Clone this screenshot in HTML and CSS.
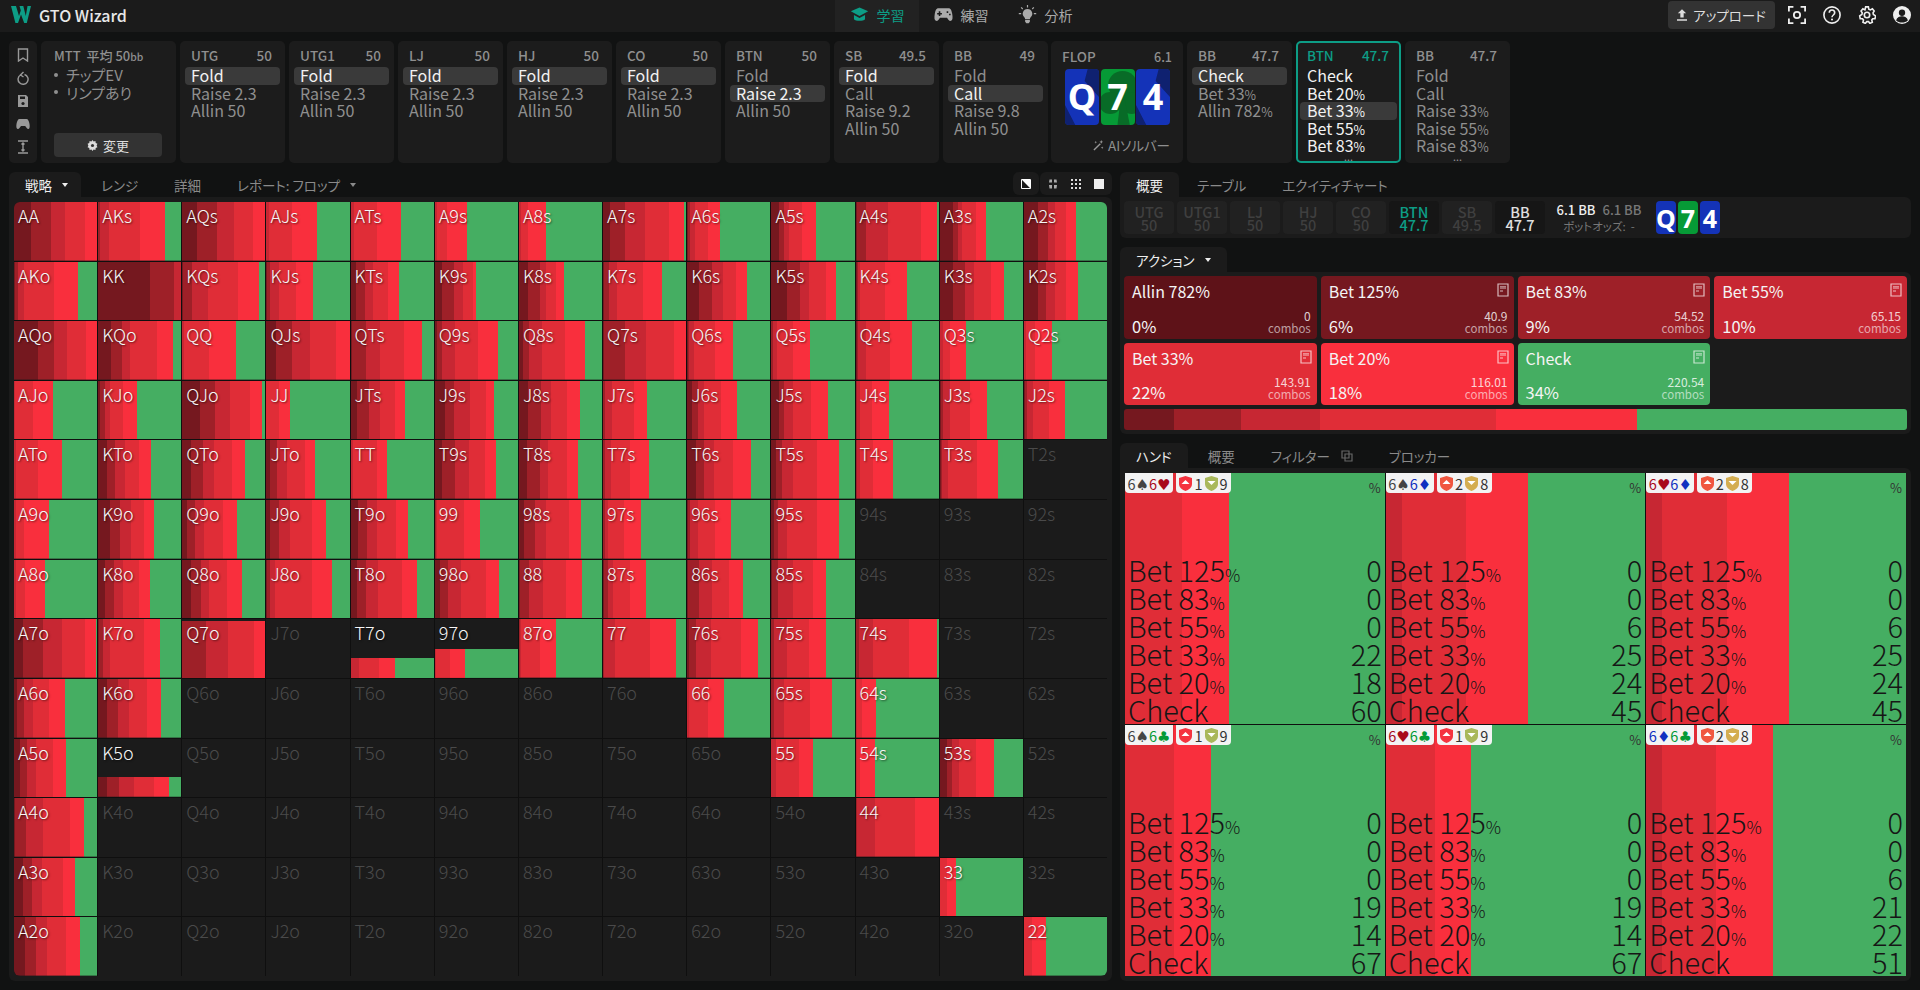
FILE: index.html
```html
<!DOCTYPE html>
<html lang="ja">
<head>
<meta charset="utf-8">
<title>GTO Wizard</title>
<link rel="stylesheet" href="styles.css">
</head>
<body>
<header class="topbar">
  <div class="brand">
    <svg class="logo" viewBox="0 0 20 17"><path fill="#0d9d86" d="M0 0h5l3 10 1.800-5.500L8.500 0h3.800l2.500 10L16.500 0H20l-4.200 17h-2.600l-3.200-8.500L7 17H4.400z"/></svg>
    <span>GTO Wizard</span>
  </div>
  <nav class="nav">
    <a class="nav-item on"><svg viewBox="0 0 24 20"><path d="M12 1l11 5-11 6L1 6z"/><path d="M5 10.500l7 3.800 7-3.800V16c-2 2.600-12 2.600-14 0z"/></svg>学習</a>
    <a class="nav-item"><svg viewBox="0 0 24 18"><path d="M6 1h12c3 0 4 2 5 7 .8 5 .7 8-1.500 9-2 .7-3.500-1.500-5-4H7.500c-1.500 2.500-3 4.700-5 4-2.200-1-2.300-4-1.500-9 1-5 2-7 5-7z"/><path fill="#1b1b1b" d="M6 5h2v2h2v2H8v2H6V9H4V7h2zM16 5h2v2h-2zM19 8h2v2h-2z"/></svg>練習</a>
    <a class="nav-item"><svg viewBox="0 0 22 24"><path d="M11 5a6 6 0 0 1 4 10.500c-.8.8-1 1.500-1 2.500H8c0-1-.2-1.700-1-2.500A6 6 0 0 1 11 5zM8 19h6v2l-1.500 2h-3L8 21z"/><path fill="none" stroke="currentColor" stroke-width="1.500" d="M11 0v3M3 3l2 2M19 3l-2 2M0 11h3M19 11h3"/></svg>分析</a>
  </nav>
  <div class="top-right">
    <button class="upload"><svg viewBox="0 0 12 14"><path fill="#ddd" d="M6 0l5 5H8v5H4V5H1zM0 12h12v2H0z"/></svg>アップロード</button>
    <svg class="top-ico" viewBox="0 0 20 20"><path fill="none" stroke="#eee" stroke-width="2" d="M1 6V1h5M14 1h5v5M19 14v5h-5M6 19H1v-5"/><circle cx="10" cy="10" r="3.500" fill="none" stroke="#eee" stroke-width="2"/></svg>
    <svg class="top-ico" viewBox="0 0 20 20"><circle cx="10" cy="10" r="9" fill="none" stroke="#eee" stroke-width="1.800"/><path fill="none" stroke="#eee" stroke-width="1.800" d="M7 7.500C7 3.500 13 3.500 13 7.500c0 2.500-3 2.500-3 5"/><circle cx="10" cy="15" r="1.200" fill="#eee"/></svg>
    <svg class="top-ico" viewBox="0 0 20 20"><path fill="none" stroke="#eee" stroke-width="1.800" d="M8.500 1h3l.5 2.500 1.700.8L16 3l2 2.500-1.300 2.100.4 1.900L19.500 11l-.6 3-2.500.1-1.100 1.500.6 2.400-2.700 1.300-1.600-2H9.800l-1.600 2-2.700-1.300.6-2.400-1.100-1.500-2.500-.1-.6-3 2.400-1.500.4-1.900L3.400 5.500 5.400 3l2.300 1.300 .3-.8z"/><circle cx="10" cy="10" r="3" fill="none" stroke="#eee" stroke-width="1.800"/></svg>
    <svg class="top-ico" viewBox="0 0 20 20"><circle cx="10" cy="10" r="10" fill="#eee"/><circle cx="10" cy="7.500" r="3.500" fill="#1b1b1b"/><path fill="#1b1b1b" d="M3.500 16c1-3.500 4-4.500 6.500-4.500s5.500 1 6.500 4.500c-3.500 3-9.500 3-13 0z"/></svg>
  </div>
</header>

<section class="tree">
  <div class="card side">
    <svg viewBox="0 0 12 14"><path fill="none" stroke="currentColor" stroke-width="1.400" d="M1.500 1h9v12L6 10l-4.500 3z"/></svg>
    <svg viewBox="0 0 12 14"><path fill="none" stroke="currentColor" stroke-width="1.400" d="M3.500 4a5 5 0 1 0 4-.5M6.500 1L3.500 4l3 2"/></svg>
    <svg viewBox="0 0 12 14"><path fill="currentColor" d="M1 1h8l2 2v10H1zM3 2.500V5h5V2.500z"/><circle cx="6" cy="9.500" r="1.600" fill="#1c1c1c"/></svg>
    <svg viewBox="0 0 14 12"><path fill="currentColor" d="M3.500 1h7c1.500 0 2.500 2 3 5 .5 3 0 5-1.300 5-1 0-2-1.500-3-3H5C4 9.500 3 11 2 11 .5 11 0 9 .5 6c.5-3 1.500-5 3-5z"/></svg>
    <svg viewBox="0 0 12 14"><path fill="none" stroke="currentColor" stroke-width="1.400" d="M1 1h10M1 13h10M6 3v8M4.500 4.500L6 3l1.500 1.500M4.500 9.500L6 11l1.500-1.500"/></svg>
  </div>
  <div class="card info">
    <div class="info-title">MTT&nbsp; 平均 50<small>bb</small></div>
    <ul class="info-list"><li>チップEV</li><li>リンプあり</li></ul>
    <button class="change"><svg viewBox="0 0 12 12"><path fill="#ddd" d="M6 0l1.200 1.700 2-.5.300 2 1.900.800-.9 2 .9 2-1.900.800-.3 2-2-.5L6 12l-1.200-1.700-2 .5-.3-2-1.900-.8.900-2-.9-2 1.900-.8.300-2 2 .5z"/><circle cx="6" cy="6" r="1.700" fill="#333"/></svg>変更</button>
  </div>
  <div class="card pos"><div class="pos-head"><span>UTG</span><span>50</span></div><div class="pos-act sel">Fold</div><div class="pos-act">Raise 2.3</div><div class="pos-act">Allin 50</div></div>
  <div class="card pos"><div class="pos-head"><span>UTG1</span><span>50</span></div><div class="pos-act sel">Fold</div><div class="pos-act">Raise 2.3</div><div class="pos-act">Allin 50</div></div>
  <div class="card pos"><div class="pos-head"><span>LJ</span><span>50</span></div><div class="pos-act sel">Fold</div><div class="pos-act">Raise 2.3</div><div class="pos-act">Allin 50</div></div>
  <div class="card pos"><div class="pos-head"><span>HJ</span><span>50</span></div><div class="pos-act sel">Fold</div><div class="pos-act">Raise 2.3</div><div class="pos-act">Allin 50</div></div>
  <div class="card pos"><div class="pos-head"><span>CO</span><span>50</span></div><div class="pos-act sel">Fold</div><div class="pos-act">Raise 2.3</div><div class="pos-act">Allin 50</div></div>
  <div class="card pos"><div class="pos-head"><span>BTN</span><span>50</span></div><div class="pos-act">Fold</div><div class="pos-act sel">Raise 2.3</div><div class="pos-act">Allin 50</div></div>
  <div class="card pos"><div class="pos-head"><span>SB</span><span>49.5</span></div><div class="pos-act sel">Fold</div><div class="pos-act">Call</div><div class="pos-act">Raise 9.2</div><div class="pos-act">Allin 50</div></div>
  <div class="card pos"><div class="pos-head"><span>BB</span><span>49</span></div><div class="pos-act">Fold</div><div class="pos-act sel">Call</div><div class="pos-act">Raise 9.8</div><div class="pos-act">Allin 50</div></div>
  <div class="card flop">
    <div class="pos-head flop-head"><span>FLOP</span><span class="flop-pot">6.1</span></div>
    <div class="board">
      <div class="pcard blue">
        <svg viewBox="0 0 33 56" preserveAspectRatio="none"><path d="M22 0h11v26L33 28 19 12zM0 36l10 20H0z"/></svg><span>Q</span></div>
      <div class="pcard green">
        <svg viewBox="0 0 33 56" preserveAspectRatio="none"><circle cx="21" cy="16" r="14"/><circle cx="9" cy="34" r="11"/><circle cx="30" cy="34" r="11"/><path d="M19 30h4l5 26H16z"/></svg><span>7</span></div>
      <div class="pcard blue">
        <svg viewBox="0 0 33 56" preserveAspectRatio="none"><path d="M22 0h11v26L33 28 19 12zM0 36l10 20H0z"/></svg><span>4</span></div>
    </div>
    <div class="solver"><svg viewBox="0 0 12 12"><path stroke="#999" stroke-width="1.500" d="M1 11l7-7"/><path fill="#999" d="M9 0l.7 1.500L11 2l-1.300.6L9 4l-.6-1.400L7 2l1.400-.5zM3 1l.4 1 1 .4-1 .4L3 4l-.4-1.200-1-.4 1-.4zM10 7l.4 1 1 .4-1 .4-.4 1.200-.4-1.200-1-.4 1-.4z"/></svg>AIソルバー</div>
  </div>
  <div class="card pos"><div class="pos-head"><span>BB</span><span>47.7</span></div><div class="pos-act sel">Check</div><div class="pos-act">Bet 33<small>%</small></div><div class="pos-act">Allin 782<small>%</small></div></div>
  <div class="card pos active"><div class="pos-head"><span>BTN</span><span>47.7</span></div><div class="pos-act">Check</div><div class="pos-act">Bet 20<small>%</small></div><div class="pos-act sel">Bet 33<small>%</small></div><div class="pos-act">Bet 55<small>%</small></div><div class="pos-act">Bet 83<small>%</small></div><div class="more">•••</div></div>
  <div class="card pos"><div class="pos-head"><span>BB</span><span>47.7</span></div><div class="pos-act">Fold</div><div class="pos-act">Call</div><div class="pos-act">Raise 33<small>%</small></div><div class="pos-act">Raise 55<small>%</small></div><div class="pos-act">Raise 83<small>%</small></div><div class="more">•••</div></div>
</section>

<main class="main">
  <section class="left">
    <div class="tabs">
      <a class="tab on">戦略<i class="caret"></i></a>
      <a class="tab">レンジ</a>
      <a class="tab">詳細</a>
      <a class="tab">レポート: フロップ<i class="caret"></i></a>
      <div class="tools">
        <div class="tool-block one"><svg viewBox="0 0 12 12"><path fill="none" stroke="#fff" stroke-width="1.200" d="M.6.6h10.800v10.800H.6z"/><path fill="#fff" d="M1 1h10v10z"/></svg></div>
        <div class="tool-block">
          <svg viewBox="0 0 10 10"><path fill="#aaa" d="M1.500.5h2.500v3H1zM6 .5h2.500L9 3.500H6zM1 6h3v3.500H1.500zM6 6h3l-.5 3.500H6z"/></svg>
          <svg viewBox="0 0 10 10"><path fill="#ddd" d="M0 0h2v2H0zM4 0h2v2H4zM8 0h2v2H8zM0 4h2v2H0zM4 4h2v2H4zM8 4h2v2H8zM0 8h2v2H0zM4 8h2v2H4zM8 8h2v2H8z"/></svg>
          <svg viewBox="0 0 10 10"><path fill="#eee" d="M0 0h10v10H0z"/></svg>
        </div>
      </div>
    </div>
    <div class="panel matrix-panel"><div class="matrix" id="matrix"></div></div>
  </section>

  <section class="right">
    <div class="tabs">
      <a class="tab on">概要</a><a class="tab">テーブル</a><a class="tab">エクイティチャート</a>
    </div>
    <div class="panel seats">
      <div class="seat"><b>UTG</b><b>50</b></div>
      <div class="seat"><b>UTG1</b><b>50</b></div>
      <div class="seat"><b>LJ</b><b>50</b></div>
      <div class="seat"><b>HJ</b><b>50</b></div>
      <div class="seat"><b>CO</b><b>50</b></div>
      <div class="seat btn"><b>BTN</b><b>47.7</b></div>
      <div class="seat"><b>SB</b><b>49.5</b></div>
      <div class="seat bb"><b>BB</b><b>47.7</b></div>
      <div class="pot">
        <div class="pot-top"><b>6.1 BB</b><b class="pot-dim">6.1 BB</b></div>
        <div class="pot-odds">ポットオッズ:&nbsp; -</div>
      </div>
      <div class="mini-board">
        <div class="mini blue">Q</div><div class="mini green">7</div><div class="mini blue">4</div>
      </div>
    </div>

    <div class="tabs action-tabs"><a class="tab on">アクション<i class="caret"></i></a></div>
    <div class="panel actions">
      <div class="action-grid" id="actions"></div>
      <div class="action-bar" id="actionBar"></div>
    </div>

    <div class="tabs hand-tabs">
      <a class="tab on">ハンド</a><a class="tab">概要</a>
      <a class="tab">フィルター<svg class="copy" viewBox="0 0 12 12"><path fill="none" stroke="#666" stroke-width="1.200" d="M1 1h7v7H1zM4 4h7v7H4z"/></svg></a>
      <a class="tab">ブロッカー</a>
    </div>
    <div class="panel hands-panel"><div class="hands" id="hands"></div></div>
  </section>
</main>
<script src="script.js"></script>
</body>
</html>
```
FILE: styles.css
```css
* { box-sizing: border-box; }
html, body { margin: 0; height: 990px; overflow: hidden; }
body {
  display: flex; flex-direction: column;
  background: #111212; color: #eee;
  font-family: "Noto Sans CJK JP", "Noto Sans", "DejaVu Sans", sans-serif;
  font-feature-settings: "palt";
}
small { font-size: .8em; line-height: 0; }

/* top bar */
.topbar { height: 32px; flex: none; background: #1b1b1b; display: flex; align-items: stretch; }
.brand { flex: 1; display: flex; align-items: center; gap: 8px; padding: 0 0 3px 11px; font-size: 16px; font-weight: 500; color: #e8e8e8; }
.logo { width: 20px; height: 17px; }
.nav { display: flex; }
.nav-item { width: 84px; padding-bottom: 3px; display: flex; align-items: center; justify-content: center; gap: 8px; font-size: 14px; color: #aaa; }
.nav-item svg { width: 19px; height: 19px; fill: currentColor; }
.nav-item.on { background: #222; color: #0d9d86; }
.top-right { flex: 1; display: flex; align-items: center; justify-content: flex-end; gap: 17px; padding: 0 9px 3px 0; }
.upload { width: 107px; height: 28px; margin-right: -4px; border: 0; border-radius: 4px; background: #333; color: #ddd; font: inherit; font-size: 13.500px; display: flex; align-items: center; justify-content: center; gap: 6px; }
.upload svg { width: 10px; height: 12px; }
.top-ico { width: 18px; height: 18px; }

/* hand tree */
.tree { flex: none; height: 122px; margin-top: 9px; padding-left: 9px; display: flex; gap: 4px; }
.card { background: #1c1c1c; border-radius: 5px; flex: none; }
.side { width: 28px; display: flex; flex-direction: column; align-items: center; gap: 9px; padding-top: 7px; color: #999; }
.side svg { width: 14px; height: 14px; }
.info { width: 135px; padding: 6px 13px 7px; display: flex; flex-direction: column; }
.info-title { font-size: 13px; font-weight: 500; color: #8f8f8f; height: 18px; line-height: 18px; }
.info-list { list-style: none; margin: 1px 0 0; padding: 0; font-size: 15px; line-height: 17.500px; color: #8f8f8f; }
.info-list li { display: flex; align-items: center; gap: 8px; }
.info-list li::before { content: ""; width: 4px; height: 4px; border-radius: 50%; background: #8f8f8f; }
.change { margin-top: auto; margin-bottom: -1px; height: 24px; width: 108px; border: 0; border-radius: 4px; background: #333; color: #ddd; font: inherit; font-size: 13px; display: flex; align-items: center; justify-content: center; gap: 5px; }
.change svg { width: 11px; height: 11px; }

.pos { width: 105px; padding: 0 5px; }
.pos-head { height: 26px; padding: 2px 8px 0 6px; display: flex; justify-content: space-between; align-items: center; font-size: 13.500px; font-weight: 500; color: #8f8f8f; }
.pos-act { height: 17.600px; line-height: 16.600px; padding: 0 6px; border-radius: 4px; font-size: 16px; color: #8f8f8f; white-space: nowrap; }
.pos-act.sel { background: #3a3a3a; color: #f2f2f2; }
.pos-act small { font-size: .78em; }
.more { text-align: center; font-family: "DejaVu Sans", sans-serif; font-size: 5px; line-height: 10px; color: #aaa; }
.pos.active { outline: 2px solid #0d9d86; outline-offset: -2px; padding: 0 4px; }
.pos.active .pos-head { color: #0d9d86; padding: 2px 8px 0 7px; }
.pos.active .pos-act { color: #f2f2f2; padding: 0 7px; }

.flop { width: 132px; margin-left: -1px; padding: 0 5px; display: flex; flex-direction: column; }
.flop-head { padding: 2px 6px 0 6px; height: 28px; }
.flop-pot { font-size: 12.500px; }
.board { display: flex; gap: 1.500px; padding-left: 9px; }
.pcard { width: 34px; height: 56px; flex: none; border-radius: 4px; overflow: hidden; position: relative; display: flex; align-items: center; justify-content: center; }
.pcard svg { position: absolute; inset: 0; width: 100%; height: 100%; }
.pcard span { position: relative; font-family: "Noto Sans", sans-serif; font-weight: 700; font-size: 36px; color: #fff; line-height: 1; }
.blue { background: #1433b8; }
.blue svg { fill: #0f2170; }
.green { background: #069a36; }
.green svg { fill: #086b27; }
.solver { margin-top: 10px; padding-right: 8px; display: flex; justify-content: flex-end; align-items: center; gap: 4px; font-size: 13.500px; color: #8f8f8f; }
.solver svg { width: 11px; height: 11px; }

/* main */
.main { flex: 1; min-height: 0; margin-top: 9px; padding: 0 9px 9px; display: flex; gap: 8px; }
.left { width: 1103px; flex: none; display: flex; flex-direction: column; }
.right { flex: 1; min-width: 0; display: flex; flex-direction: column; }
.tabs { height: 25px; flex: none; display: flex; align-items: stretch; font-size: 13.500px; color: #8a8a8a; }
.tab { padding: 0 18px; display: flex; align-items: center; gap: 8px; white-space: nowrap; }
.tab.on { padding: 0 16px; background: #1b1b1b; color: #eee; border-radius: 6px 6px 0 0; }
.left .tab { padding: 0 16px 0 20px; }
.left .tab.on { padding: 0 13px 0 16px; }
.hand-tabs .tab.on { margin-right: 2px; }
.caret { width: 0; height: 0; border: 3.500px solid transparent; border-top: 4px solid currentColor; border-bottom: 0; margin-left: 2px; }
.tools { margin-left: auto; display: flex; gap: 1px; height: 23px; }
.tool-block { background: #1b1b1b; border-radius: 6px; display: flex; align-items: center; gap: 13px; padding: 0 8px; }
.tool-block svg { width: 10px; height: 10px; }
.panel { background: #1b1b1b; border-radius: 0 6px 6px 6px; }
.matrix-panel { flex: 1; min-height: 0; padding: 5px; }
.matrix { height: 100%; display: grid; grid-template-columns: repeat(13, 1fr); grid-template-rows: repeat(13, 1fr); gap: 1px; background: #0f0f0f; border-radius: 6px; overflow: hidden; }
.cell { min-width: 0; min-height: 0; padding-left: 4px; font-size: 18px; font-weight: 300; line-height: 26px; color: #f6f6f6; text-shadow: 1px 1px 2px rgba(0,0,0,.55); background-color: #1b1b1b; }
.cell.off { color: #4a4a4a; text-shadow: none; }

/* right */
.seats { flex: none; height: 41px; padding: 4px; display: flex; gap: 3px; }
.seat { width: 50px; border-radius: 4px; background: #212121; display: flex; flex-direction: column; align-items: center; justify-content: center; color: #3f3f3f; font-size: 14.500px; line-height: 13px; }
.seat b { font-weight: 500; }
.seat.btn { color: #0d9d86; background: #161616; }
.seat.bb { color: #e0e0e0; background: #161616; }
.pot { width: 92px; margin-left: 5px; display: flex; flex-direction: column; align-items: center; }
.pot-top { display: flex; gap: 7px; font-size: 13px; line-height: 18px; color: #eee; white-space: nowrap; }
.pot-top b { font-weight: 500; }
.pot-dim { color: #777; }
.pot-odds { font-size: 11.500px; line-height: 15px; color: #777; white-space: nowrap; }
.mini-board { display: flex; gap: 2px; margin-left: 8px; }
.mini { width: 20px; height: 33px; border-radius: 4px; display: flex; align-items: center; justify-content: center; font-family: "Noto Sans", sans-serif; font-weight: 700; font-size: 25px; color: #fff; }

.action-tabs { margin-top: 9px; }
.actions { flex: none; height: 162px; padding: 4px; display: flex; flex-direction: column; gap: 4px; }
.action-grid { height: 129px; display: grid; grid-template-columns: repeat(4, 1fr); grid-template-rows: 63px 62px; gap: 4px; }
.action { border-radius: 4px; padding: 3px 6px 5px 8px; display: flex; flex-direction: column; justify-content: space-between; color: #f4f4f4; }
.action-top, .action-bottom { display: flex; justify-content: space-between; }
.action-name { font-size: 16px; line-height: 24px; }
.doc { width: 12px; height: 14px; margin-top: 4px; margin-right: -1px; }
.action-bottom { align-items: flex-end; }
.action-pct { font-size: 16.500px; line-height: 20px; margin-bottom: -2px; }
.combo { text-align: right; font-size: 12px; line-height: 12px; color: rgba(255,255,255,.8); }
.combo div:last-child { font-size: 11.500px; color: rgba(255,255,255,.6); }
.action-bar { height: 21px; display: flex; border-radius: 3px; overflow: hidden; }

.hand-tabs { margin-top: 9px; }
.hand-tabs .tab:nth-child(3) { gap: 11px; }
.copy { width: 12px; height: 12px; }
.hands-panel { flex: 1; min-height: 0; padding: 5px; }
.hands { height: 100%; display: grid; grid-template-columns: repeat(3, 1fr); grid-template-rows: repeat(2, 1fr); gap: 1px; background: #0f0f0f; }
.hand { min-width: 0; min-height: 0; display: flex; flex-direction: column; justify-content: space-between; padding-bottom: 1px; }
.hand-top { display: flex; gap: 3px; height: 20px; }
.chip { height: 20px; background: #f3f3f3; border-radius: 0 0 4px 4px; display: flex; align-items: center; justify-content: center; font-size: 14.500px; color: #333; }
.chip.cards { width: 48px; }
.chip.block { width: 55px; gap: 2px; }
.chip svg { width: 13px; height: 15px; }
.suit { font-family: "DejaVu Sans", sans-serif; font-size: 15px; }
.pct { margin-left: auto; margin-right: 4px; margin-top: 6px; font-size: 13px; line-height: 18px; color: #333; }
.hand-lines { padding: 0 3px 0 3px; color: #161616; font-weight: 300; font-size: 29px; line-height: 28px; }
.hline { display: flex; justify-content: space-between; white-space: nowrap; }
.hline small { font-size: 17px; }
```
FILE: script.js
```js
var C = ['#75181f', '#9e2028', '#c72733', '#e02d37', '#f92f3d'], G = '#45ae62';
var R = 'AKQJT98765432'.split('');

// cumulative stops (% of the cell) for Bet 125 / 83 / 55 / 33 / 20; the rest is Check
var D = {
  AA:[21,45,62,85,100],AKs:[0,3,13,51,81],AQs:[18,42,63,86,100],AJs:[0,0,3,31,61],ATs:[0,0,4,31,60],A9s:[0,0,3,14,38],A8s:[0,0,2,11,32],A7s:[8,27,51,80,97],A6s:[1,4,10,25,40],A5s:[9,16,21,37,53],A4s:[1,12,38,78,98],A3s:[16,22,27,43,56],A2s:[17,29,37,51,63],
  AKo:[1,5,12,48,77],KK:[63,92,100,100,100],KQs:[1,12,31,68,93],KJs:[1,5,16,36,56],KTs:[6,17,27,44,58],K9s:[8,23,34,46,49],K8s:[11,25,33,44,54],K7s:[1,7,17,48,71],K6s:[15,30,43,59,72],K5s:[19,34,45,65,77],K4s:[1,2,5,35,61],K3s:[16,30,41,62,77],K2s:[17,27,37,51,65],
  AQo:[29,48,64,87,100],KQo:[16,29,38,71,90],QQ:[0,0,3,32,65],QJs:[12,31,52,83,100],QTs:[1,18,35,64,85],Q9s:[2,9,24,52,76],Q8s:[5,12,28,56,79],Q7s:[1,27,52,85,100],Q6s:[1,3,9,34,56],Q5s:[0,2,7,26,46],Q4s:[1,3,12,41,68],Q3s:[0,0,4,12,31],Q2s:[0,0,3,13,34],
  AJo:[0,0,1,23,47],KJo:[3,8,14,30,47],QJo:[22,40,58,82,96],JJ:[0,0,0,16,28],JTs:[7,22,35,53,65],J9s:[12,23,42,61,71],J8s:[11,26,39,58,73],J7s:[0,2,11,37,53],J6s:[6,13,21,41,60],J5s:[9,16,26,48,68],J4s:[0,1,5,19,40],J3s:[1,4,12,36,57],J2s:[1,4,11,30,49],
  ATo:[0,0,2,29,58],KTo:[11,20,32,49,64],QTo:[11,25,38,60,76],JTo:[5,13,25,46,58],TT:[0,0,3,31,43],T9s:[8,24,41,60,73],T8s:[10,25,35,58,71],T7s:[0,2,10,33,56],T6s:[11,21,32,56,77],T5s:[6,13,26,55,81],T4s:[0,1,5,21,44],T3s:[1,3,10,44,70],
  A9o:[0,0,3,12,42],K9o:[14,27,40,56,67],Q9o:[6,16,26,49,66],J9o:[5,15,29,55,72],T9o:[8,19,31,54,69],'99':[0,1,3,35,54],'98s':[6,19,32,60,75],'97s':[0,2,6,25,46],'96s':[1,4,13,34,53],'95s':[3,8,19,55,81],
  A8o:[0,0,3,13,37],K8o:[8,19,30,49,63],Q8o:[11,23,32,54,72],J8o:[1,5,11,55,78],T8o:[7,18,33,62,79],'98o':[6,16,31,61,77],'88':[1,12,29,57,76],'87s':[1,6,12,33,52],'86s':[1,15,30,51,67],'85s':[1,8,26,50,65],
  A7o:[11,35,58,86,99],K7o:[1,6,14,55,75],Q7o:[0,29,55,87,100],T7o:[0,0,10,34,53],'97o':[0,0,1,18,36],'87o':[0,1,2,25,45],'77':[0,1,15,57,88],'76s':[2,11,29,65,85],'75s':[0,3,19,45,66],'74s':[0,4,21,64,98],
  A6o:[4,12,23,42,62],K6o:[11,24,37,59,76],'66':[0,0,3,25,44],'65s':[0,3,15,47,73],'64s':[0,0,1,7,24],
  A5o:[7,16,26,47,63],K5o:[11,25,43,67,86],'55':[0,0,6,33,50],'54s':[0,0,1,5,23],'53s':[9,15,23,43,65],
  A4o:[1,15,35,68,84],'44':[0,1,23,71,100],
  A3o:[11,22,34,59,73],'33':[0,0,0,8,19],
  A2o:[13,26,40,63,80],'22':[0,0,0,10,26]
};
var H = { Q7o: 97, T7o: 34, '97o': 49, K5o: 34 };

function gradient(stops, colors) {
  var parts = [], prev = 0;
  stops.forEach(function (s, i) {
    if (s > prev) { parts.push(colors[i] + ' ' + prev + '% ' + s + '%'); prev = s; }
  });
  if (prev < 100) parts.push(G + ' ' + prev + '% 100%');
  return 'linear-gradient(90deg,' + parts.join(',') + ')';
}

var matrix = document.getElementById('matrix');
R.forEach(function (a, i) {
  R.forEach(function (b, j) {
    var name = i === j ? a + b : i < j ? a + b + 's' : b + a + 'o';
    var el = document.createElement('div');
    el.className = 'cell';
    el.textContent = name;
    if (D[name]) {
      var h = H[name] || 100;
      el.style.background = gradient(D[name], C) + ' left bottom / 100% ' + h + '% no-repeat #1b1b1b';
    } else {
      el.classList.add('off');
    }
    matrix.appendChild(el);
  });
});

var doc = '<svg class="doc" viewBox="0 0 12 14"><path fill="none" stroke="rgba(255,255,255,.7)" stroke-width="1.200" d="M1 1h10v12H1zM3 5h6M3 8h3"/><path fill="rgba(255,255,255,.45)" d="M3 3h6v1H3z"/></svg>';
var A = [
  ['Allin 782%', '0%', '0', '#5e1218', false, 0],
  ['Bet 125%', '6%', '40.9', '#75181f', true, 6.4],
  ['Bet 83%', '9%', '54.52', '#9e2028', true, 8.6],
  ['Bet 55%', '10%', '65.15', '#c72733', true, 10],
  ['Bet 33%', '22%', '143.91', '#e02d37', true, 22.5],
  ['Bet 20%', '18%', '116.01', '#f92f3d', true, 18],
  ['Check', '34%', '220.54', G, true, 34.5]
];
var actions = document.getElementById('actions'), bar = document.getElementById('actionBar');
A.forEach(function (a) {
  var el = document.createElement('div');
  el.className = 'action';
  el.style.background = a[3];
  el.innerHTML = '<div class="action-top"><span class="action-name">' + a[0] + '</span>' + (a[4] ? doc : '') + '</div>' +
    '<div class="action-bottom"><span class="action-pct">' + a[1] + '</span><div class="combo"><div>' + a[2] + '</div><div>combos</div></div></div>';
  actions.appendChild(el);
  if (a[5]) {
    var s = document.createElement('div');
    s.style.background = a[3];
    s.style.width = a[5] + '%';
    bar.appendChild(s);
  }
});

function shield(color, up) {
  return '<svg viewBox="0 0 13 15"><path fill="' + color + '" d="M6.500 0L13 2v6c0 3.500-3.500 6-6.500 7C3.500 14 0 11.500 0 8V2z"/>' +
    '<path fill="#fff" d="' + (up ? 'M6.500 4L10.500 8h-8z' : 'M2.500 5h8l-4 4z') + '"/></svg>';
}
var S = { s: ['♠', '#444'], h: ['♥', '#a80a1a'], d: ['♦', '#1030c0'], c: ['♣', '#049a36'] };
function card(c) {
  var s = S[c];
  return '<span style="color:' + s[1] + '">6<span class="suit">' + s[0] + '</span></span>';
}
var LABELS = ['Bet 125', 'Bet 83', 'Bet 55', 'Bet 33', 'Bet 20', 'Check'];
var HANDS = [
  ['s', 'h', 1, 9, [0, 0, 0, 22, 18, 60]],
  ['s', 'd', 2, 8, [0, 0, 6, 25, 24, 45]],
  ['h', 'd', 2, 8, [0, 0, 6, 25, 24, 45]],
  ['s', 'c', 1, 9, [0, 0, 0, 19, 14, 67]],
  ['h', 'c', 1, 9, [0, 0, 0, 19, 14, 67]],
  ['d', 'c', 2, 8, [0, 0, 6, 21, 22, 51]]
];
var hands = document.getElementById('hands');
HANDS.forEach(function (h) {
  var el = document.createElement('div');
  el.className = 'hand';
  var sum = 0, stops = h[4].slice(0, 5).map(function (v) { sum += v; return sum; });
  el.style.background = gradient(stops, C);
  var one = h[2] === 1;
  var lines = LABELS.map(function (l, i) {
    return '<div class="hline"><span>' + l + (i < 5 ? '<small>%</small>' : '') + '</span><span>' + h[4][i] + '</span></div>';
  }).join('');
  el.innerHTML = '<div class="hand-top"><span class="chip cards">' + card(h[0]) + card(h[1]) + '</span>' +
    '<span class="chip block">' + shield(one ? '#f5333f' : '#f0563f', true) + h[2] + shield(one ? '#a9b85a' : '#d4ad50', false) + h[3] + '</span>' +
    '<span class="pct">%</span></div><div class="hand-lines">' + lines + '</div>';
  hands.appendChild(el);
});
```
